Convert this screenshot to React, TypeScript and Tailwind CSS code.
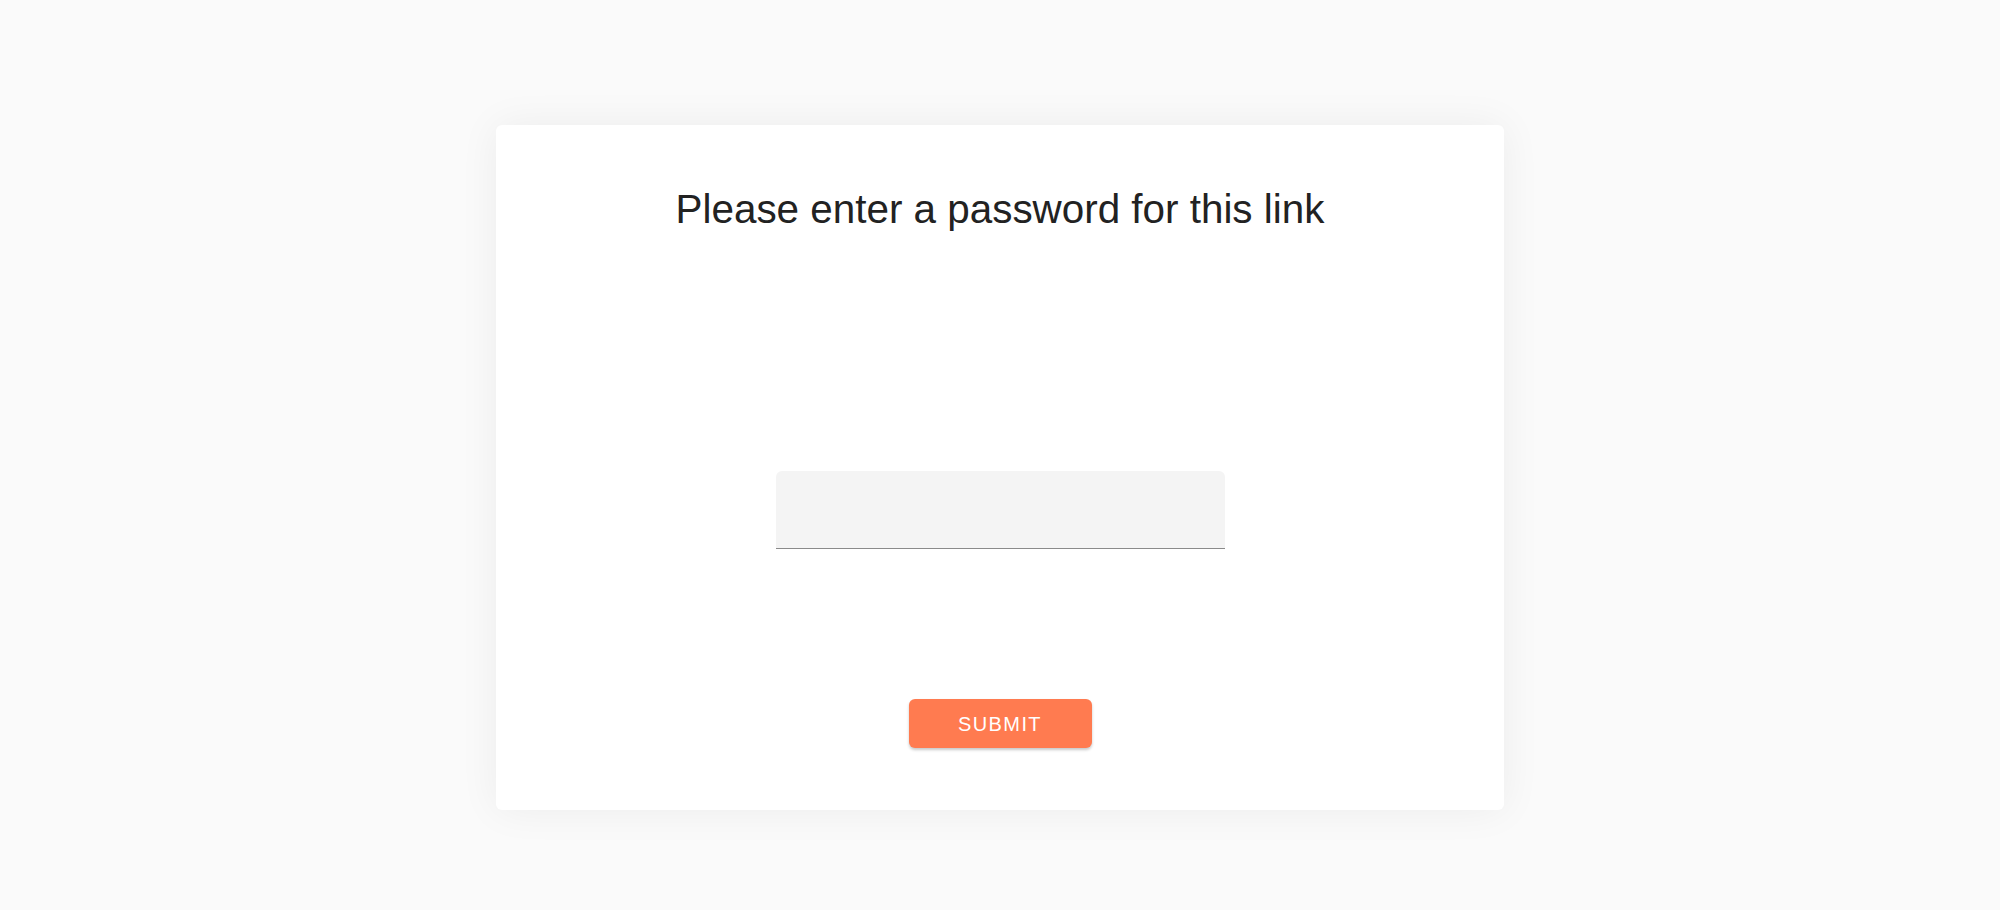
import React from "react";

export default function App() {
  return (
    <div
      className="min-h-[910px] w-full bg-[#fafafa] flex justify-center pt-[125px]"
      style={{ fontFamily: '"Liberation Sans", Arial, Helvetica, sans-serif' }}
    >
      <div className="w-[1008px] h-[685px] bg-white rounded-[6px] shadow-[0_0_40px_rgba(0,0,0,0.06)] flex flex-col items-center pt-[61px]">
        <h1 className="text-[40.4px] leading-[46px] text-[#222222] font-normal">
          Please enter a password for this link
        </h1>
        <div className="mt-[239px] w-[449px] h-[78px] bg-[#f4f4f4] rounded-t-[6px] border-b border-[#8a8a8a]">
          <input
            type="password"
            className="w-full h-full bg-transparent outline-none px-4 text-[20px]"
          />
        </div>
        <button className="mt-[150px] w-[183px] h-[49px] rounded-[6px] bg-[#ff7b50] text-white text-[20px] tracking-[0.07em] uppercase shadow-[0_2px_3px_rgba(0,0,0,0.22)]">
          Submit
        </button>
      </div>
    </div>
  );
}
